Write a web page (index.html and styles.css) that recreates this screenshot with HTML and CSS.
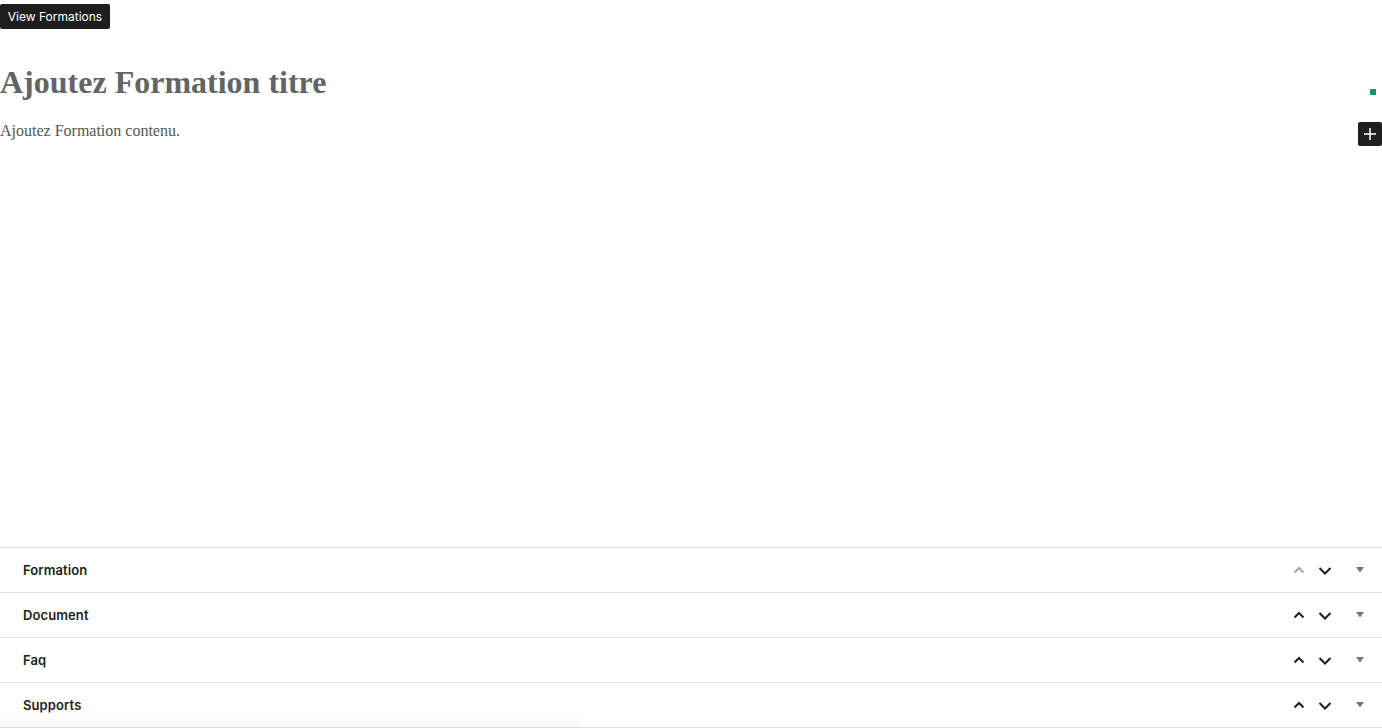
FILE: index.html
```html
<!DOCTYPE html>
<html lang="fr">
<head>
  <meta charset="UTF-8" />
  <meta name="viewport" content="width=device-width, initial-scale=1.0"/>
  <title>Formation</title>
  <link rel="stylesheet" href="styles.css">
</head>
<body>

  <div id="page">

    <!-- Barre du haut -->
    <div id="top-bar">
      <button id="view-btn">View Formations</button>
    </div>

    <!-- Zone d'édition -->
    <div id="editor">
      <h1 id="post-title">Ajoutez Formation titre</h1>
      <p id="post-content">Ajoutez Formation contenu.</p>

      <span id="status-dot"></span>
      <button id="add-block" aria-label="Ajouter un bloc">
        <svg width="24" height="24" viewBox="0 0 24 24"><path d="M11.25 6h1.5v5.25H18v1.5h-5.25V18h-1.5v-5.25H6v-1.5h5.25z" fill="#fff"/></svg>
      </button>
    </div>

    <!-- Metaboxes -->
    <div id="metaboxes">
      <div class="metabox">
        <span class="metabox-title">Formation</span>
        <div class="metabox-actions">
          <button class="move-btn disabled"><svg width="24" height="24" viewBox="0 0 24 24"><path d="M7.5 14.5L12 10l4.5 4.5"/></svg></button>
          <button class="move-btn"><svg width="24" height="24" viewBox="0 0 24 24"><path d="M6.5 10l5.5 5.5 5.5-5.5"/></svg></button>
          <span class="toggle"><svg width="8" height="6" viewBox="0 0 8 6"><path d="M0 0h8L4 5.5z"/></svg></span>
        </div>
      </div>
      <div class="metabox">
        <span class="metabox-title">Document</span>
        <div class="metabox-actions">
          <button class="move-btn"><svg width="24" height="24" viewBox="0 0 24 24"><path d="M7.5 14.5L12 10l4.5 4.5"/></svg></button>
          <button class="move-btn"><svg width="24" height="24" viewBox="0 0 24 24"><path d="M6.5 10l5.5 5.5 5.5-5.5"/></svg></button>
          <span class="toggle"><svg width="8" height="6" viewBox="0 0 8 6"><path d="M0 0h8L4 5.5z"/></svg></span>
        </div>
      </div>
      <div class="metabox">
        <span class="metabox-title">Faq</span>
        <div class="metabox-actions">
          <button class="move-btn"><svg width="24" height="24" viewBox="0 0 24 24"><path d="M7.5 14.5L12 10l4.5 4.5"/></svg></button>
          <button class="move-btn"><svg width="24" height="24" viewBox="0 0 24 24"><path d="M6.5 10l5.5 5.5 5.5-5.5"/></svg></button>
          <span class="toggle"><svg width="8" height="6" viewBox="0 0 8 6"><path d="M0 0h8L4 5.5z"/></svg></span>
        </div>
      </div>
      <div class="metabox">
        <span class="metabox-title">Supports</span>
        <div class="metabox-actions">
          <button class="move-btn"><svg width="24" height="24" viewBox="0 0 24 24"><path d="M7.5 14.5L12 10l4.5 4.5"/></svg></button>
          <button class="move-btn"><svg width="24" height="24" viewBox="0 0 24 24"><path d="M6.5 10l5.5 5.5 5.5-5.5"/></svg></button>
          <span class="toggle"><svg width="8" height="6" viewBox="0 0 8 6"><path d="M0 0h8L4 5.5z"/></svg></span>
        </div>
      </div>
      <div id="scroll-shadow"></div>
    </div>

  </div>

</body>
</html>
```

FILE: styles.css
```css
/* Reset */
* {
  margin: 0;
  padding: 0;
  box-sizing: border-box;
}

body {
  background: #fff;
  font-family: Inter, "Liberation Sans", sans-serif;
  color: #1e1e1e;
  height: 100vh;
  overflow: hidden;
}

#page {
  display: flex;
  flex-direction: column;
  height: 100vh;
}

/* Barre du haut */
#top-bar {
  padding-top: 4px;
}

#view-btn {
  border: none;
  background: #1e1e1e;
  color: #fff;
  font-family: Inter, "Liberation Sans", sans-serif;
  font-size: 12px;
  line-height: 23px;
  height: 25px;
  width: 110px;
  border-radius: 2px;
  cursor: pointer;
}

/* Zone d'édition */
#editor {
  flex: 1;
  position: relative;
}

#post-title {
  font-family: "Liberation Serif", serif;
  font-size: 32px;
  font-weight: bold;
  color: #646464;
  margin-top: 36px;
  line-height: 1.107;
}

#post-content {
  font-family: "Liberation Serif", serif;
  font-size: 16px;
  color: #555;
  margin-top: 22px;
}

#status-dot {
  position: absolute;
  top: 60px;
  right: 6px;
  width: 6px;
  height: 6px;
  background: #1f9463;
}

#add-block {
  position: absolute;
  top: 93px;
  right: 0;
  width: 24px;
  height: 24px;
  border: none;
  border-radius: 2px;
  background: #1e1e1e;
  display: flex;
  align-items: center;
  justify-content: center;
}

/* Metaboxes */
#metaboxes {
  position: relative;
  border-bottom: 1px solid #ddd;
}

.metabox {
  display: flex;
  align-items: center;
  justify-content: space-between;
  height: 45px;
  border-top: 1px solid #ddd;
  padding: 0 18px 0 23px;
}

.metabox-title {
  font-size: 13px;
  font-weight: 600;
  color: #1e1e1e;
  letter-spacing: 0.1px;
}

.metabox-actions {
  display: flex;
  align-items: center;
}

.move-btn {
  border: none;
  background: none;
  width: 24px;
  height: 24px;
  margin-left: 2px;
  display: flex;
  align-items: center;
  justify-content: center;
}

.move-btn svg {
  fill: none;
  stroke: #1e1e1e;
  stroke-width: 2;
}

.move-btn.disabled svg {
  stroke: #a7a7a7;
}

.toggle {
  display: flex;
  width: 8px;
  margin-left: 19px;
  fill: #757575;
}

#scroll-shadow {
  position: absolute;
  left: 0;
  bottom: 0;
  width: 580px;
  height: 12px;
  background: linear-gradient(to bottom, rgba(0,0,0,0), rgba(0,0,0,0.04));
  pointer-events: none;
}
```
